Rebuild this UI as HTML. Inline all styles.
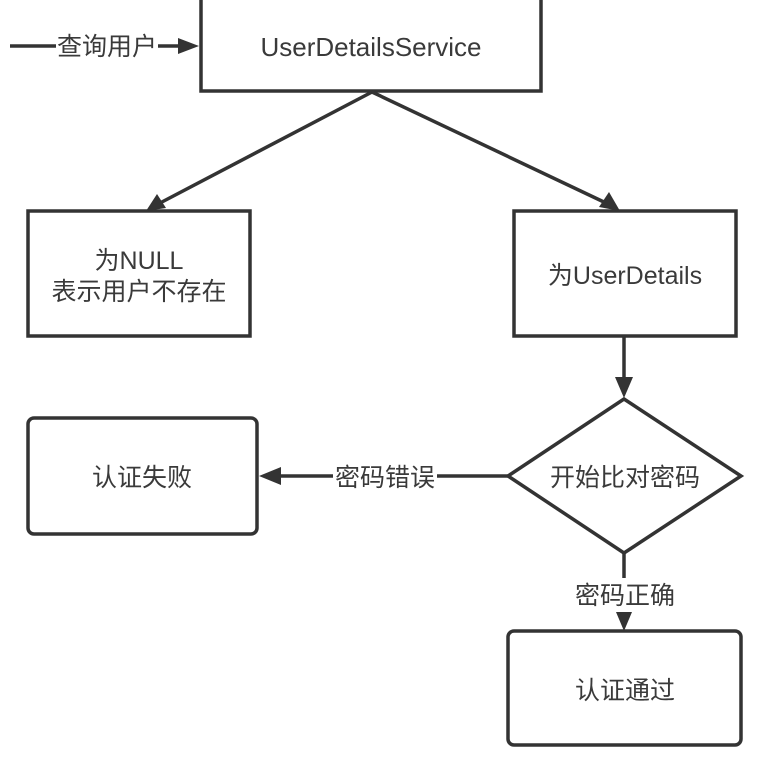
<!DOCTYPE html>
<html><head><meta charset="utf-8"><style>
html,body{margin:0;padding:0;background:#fff;width:767px;height:765px;overflow:hidden}
svg text{font-family:"Liberation Sans","Noto Sans CJK SC",sans-serif;fill:#3a3a3a;font-size:25px}
</style></head><body>
<svg width="767" height="765" viewBox="0 0 767 765" xmlns="http://www.w3.org/2000/svg">
<g stroke="#333" stroke-width="3.5" fill="none">
<rect x="201" y="-2" width="340" height="93"/>
<rect x="28" y="211" width="222" height="125"/>
<rect x="514" y="211" width="222" height="125"/>
<rect x="28" y="418" width="229" height="116" rx="6"/>
<rect x="508" y="631" width="233" height="114" rx="6"/>
<polygon points="624,399 741,476 624,553 508,476"/>
<line x1="10" y1="46" x2="56" y2="46"/>
<line x1="158" y1="46" x2="180" y2="46"/>
<line x1="372" y1="92" x2="160" y2="203"/>
<line x1="372" y1="92" x2="606" y2="203"/>
<line x1="624" y1="337" x2="624" y2="382"/>
<line x1="508" y1="476" x2="437" y2="476"/>
<line x1="333" y1="476" x2="278" y2="476"/>
<line x1="624" y1="553" x2="624" y2="578"/>
</g>
<g fill="#333">
<polygon points="199,46 178,38 178,54"/>
<polygon points="146,211 157,194 166,208"/>
<polygon points="620,211 599,207 609,192"/>
<polygon points="624,398 615,377 633,377"/>
<polygon points="259,476 281,467 281,485"/>
<polygon points="624,631 616,612 632,612"/>
</g>
<text x="57" y="55">查询用户</text>
<text x="371" y="56" text-anchor="middle" style="font-size:26px">UserDetailsService</text>
<text x="139" y="269" text-anchor="middle">为NULL</text>
<text x="139" y="300" text-anchor="middle">表示用户不存在</text>
<text x="625" y="284" text-anchor="middle">为UserDetails</text>
<text x="625" y="486" text-anchor="middle">开始比对密码</text>
<text x="385" y="486" text-anchor="middle">密码错误</text>
<text x="142" y="486" text-anchor="middle">认证失败</text>
<text x="625" y="604" text-anchor="middle">密码正确</text>
<text x="625" y="699" text-anchor="middle">认证通过</text>
</svg>
</body></html>
